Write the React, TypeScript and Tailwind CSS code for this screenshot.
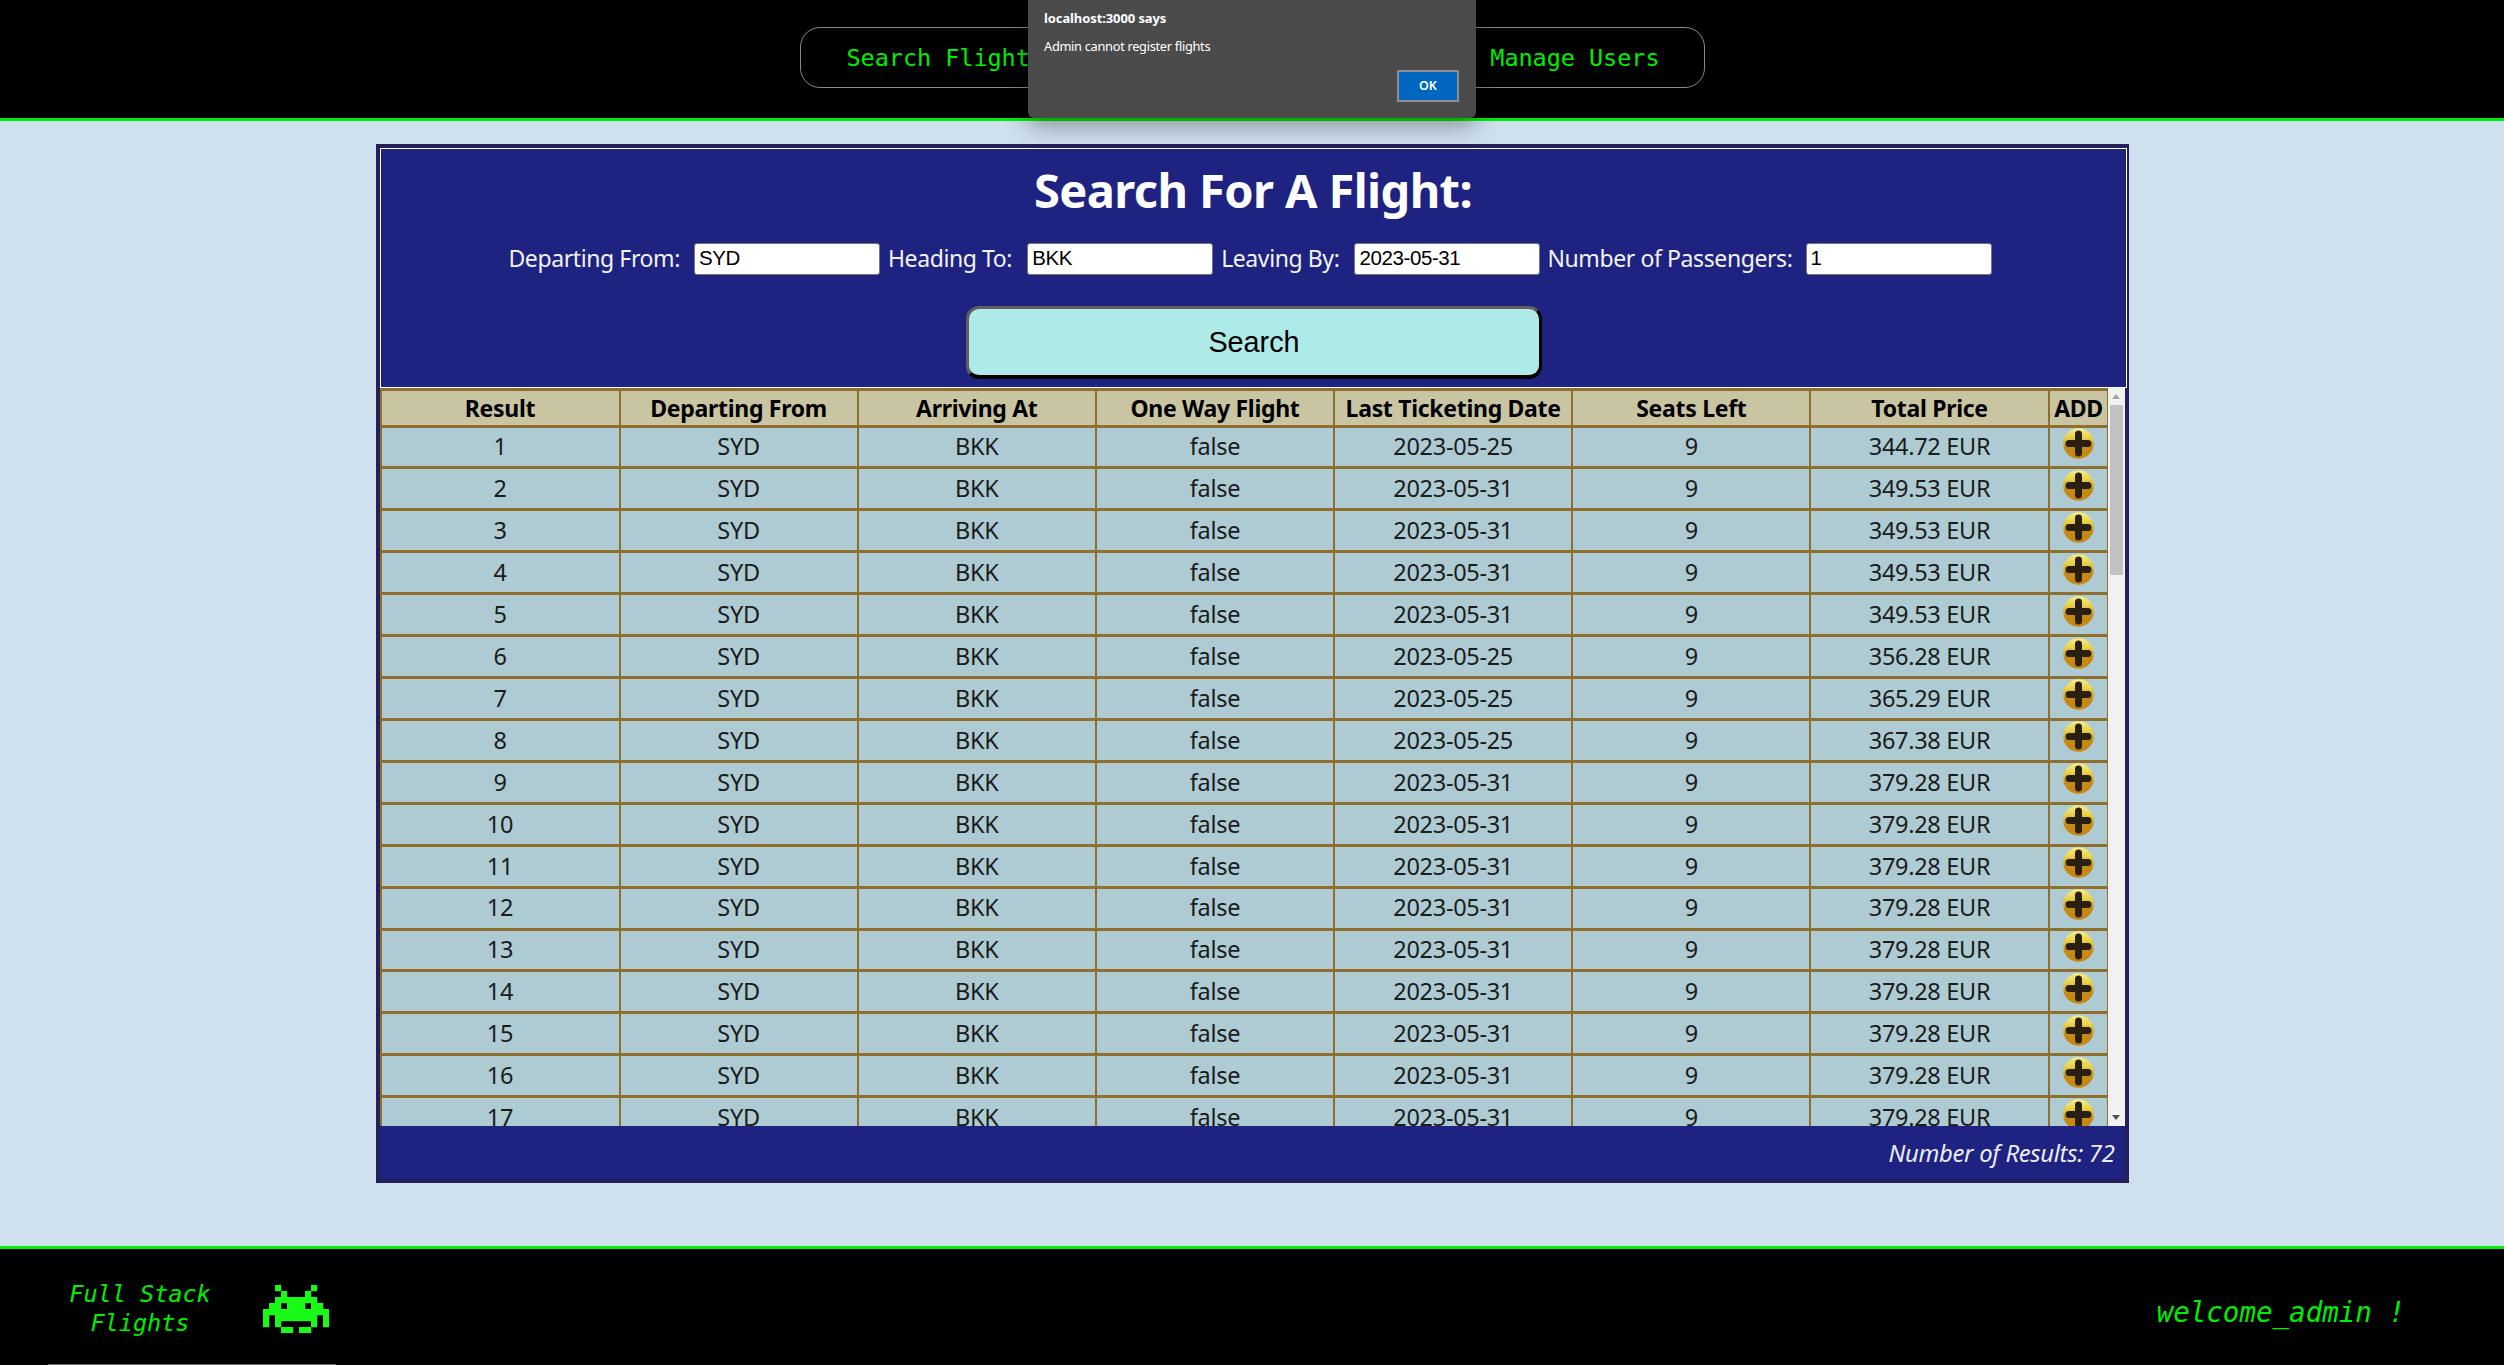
const dates = ["2023-05-25","2023-05-31","2023-05-31","2023-05-31","2023-05-31","2023-05-25","2023-05-25","2023-05-25","2023-05-31","2023-05-31","2023-05-31","2023-05-31","2023-05-31","2023-05-31","2023-05-31","2023-05-31","2023-05-31"];
const prices = ["344.72","349.53","349.53","349.53","349.53","356.28","365.29","367.38","379.28","379.28","379.28","379.28","379.28","379.28","379.28","379.28","379.28"];
const headers = ["Result","Departing From","Arriving At","One Way Flight","Last Ticketing Date","Seats Left","Total Price","ADD"];
const invader = [
  "..#.....#..",
  "...#...#...",
  "..#######..",
  ".##.###.##.",
  "###########",
  "#.#######.#",
  "#.#.....#.#",
  "...##.##...",
];

function Invader() {
  return (
    <svg width="66" height="48" viewBox="0 0 66 48" className="block">
      {invader.flatMap((row, y) =>
        row.split("").map((c, x) =>
          c === "#" ? <rect key={`${x}-${y}`} x={x * 6} y={y * 6} width="6.2" height="6.2" fill="#17fb17" /> : null
        )
      )}
    </svg>
  );
}

function PlusIcon({ id }: { id: number }) {
  return (
    <svg width="31" height="31" viewBox="0 0 31 31" className="block mx-auto -mt-[7px]">
      <defs>
        <linearGradient id={`gold${id}`} x1="0" y1="0" x2="0" y2="1">
          <stop offset="0" stopColor="#f6ee8a" />
          <stop offset="0.3" stopColor="#e8d24a" />
          <stop offset="0.5" stopColor="#d6ae22" />
          <stop offset="0.62" stopColor="#c68a14" />
          <stop offset="1" stopColor="#c8860f" />
        </linearGradient>
      </defs>
      <circle cx="15.5" cy="15.5" r="15.3" fill={`url(#gold${id})`} />
      <path d="M15.5 6V25M6 15.5H25" stroke="#2a2012" strokeWidth="7" strokeLinecap="round" />
    </svg>
  );
}

function Field({ label, value, className }: { label: string; value: string; className: string }) {
  return (
    <>
      <label className={`${className} pb-[2px]`}>{label}</label>
      <input
        readOnly
        value={value}
        className="w-[186px] h-[32px] bg-white border border-[#767676] rounded-[3px] px-[4px] pb-[2px] text-[20.5px] text-black font-['Liberation_Sans',sans-serif] outline-none"
      />
    </>
  );
}

export default function App() {
  return (
    <div className="relative h-[1365px] w-full flex flex-col bg-[#cfe0ef] overflow-hidden font-['Noto_Sans',sans-serif]">
      <header className="h-[121px] shrink-0 bg-black border-b-[3px] border-[#00ee00] flex justify-center pt-[27px]">
        <nav className="w-[905px] h-[61px] rounded-[20px] border border-[#8a8a8a] flex items-center justify-between pl-[46px] pr-[44px] pt-[2px] font-['DejaVu_Sans_Mono',monospace] text-[23.5px] tracking-[-0.05px] text-[#00ee00]">
          <span>Search Flights</span>
          <span>Manage Users</span>
        </nav>
      </header>

      <main className="flex-1 flex justify-center pt-[23px]">
        <section className="w-[1753px] h-[1039px] border-4 border-[#26205a] bg-[#1e2382] flex flex-col">
          <div className="h-[240px] shrink-0 -mr-[2px] border border-white flex flex-col items-center text-white">
            <h1 className="mt-[12px] h-[58px] leading-[58px] text-[47px] font-bold tracking-[-0.6px]">Search For A Flight:</h1>
            <div className="mt-[24px] h-[32px] flex items-center justify-center pr-[6px] text-[23px] tracking-[-0.4px] text-[#f3f3f3]">
              <Field label="Departing From:" value="SYD" className="mr-[14px]" />
              <Field label="Heading To:" value="BKK" className="ml-[8px] mr-[15px]" />
              <Field label="Leaving By:" value="2023-05-31" className="ml-[8px] mr-[15px]" />
              <Field label="Number of Passengers:" value="1" className="ml-[7px] mr-[13px]" />
            </div>
            <button className="mt-[31px] ml-[2px] w-[576px] h-[73px] pt-[2px] rounded-[13px] bg-[#aeeae7] border-[3px] border-t-[#5f5f5f] border-l-[#5f5f5f] border-r-black border-b-[4px] border-b-black text-black text-[28.8px] font-['Liberation_Sans',sans-serif]">
              Search
            </button>
          </div>

          <div className="h-[738px] shrink-0 flex">
            <div className="w-[1728px] shrink-0 overflow-hidden">
              <table className="w-[1728px] table-fixed border-collapse text-center text-[23.5px] tracking-[-0.3px] text-[#1b1b1b]">
                <colgroup>
                  <col className="w-[239px]" />
                  <col className="w-[238.2px]" />
                  <col className="w-[238.2px]" />
                  <col className="w-[238.2px]" />
                  <col className="w-[238.2px]" />
                  <col className="w-[238.2px]" />
                  <col className="w-[238.2px]" />
                  <col className="w-[59.8px]" />
                </colgroup>
                <thead>
                  <tr className="h-[36.5px] bg-[#c9c5a2]">
                    {headers.map((h) => (
                      <th key={h} className="border-x-2 border-y-[3px] border-[#8f6f2d] p-0 font-bold text-black leading-[30px] whitespace-nowrap text-[23px]">
                        {h}
                      </th>
                    ))}
                  </tr>
                </thead>
                <tbody>
                  {dates.map((d, i) => (
                    <tr key={i} className="h-[41.93px] bg-[#aecbd3]">
                      <td className="border-x-2 border-y-[3px] border-[#8f6f2d] p-0">{i + 1}</td>
                      <td className="border-x-2 border-y-[3px] border-[#8f6f2d] p-0">SYD</td>
                      <td className="border-x-2 border-y-[3px] border-[#8f6f2d] p-0">BKK</td>
                      <td className="border-x-2 border-y-[3px] border-[#8f6f2d] p-0">false</td>
                      <td className="border-x-2 border-y-[3px] border-[#8f6f2d] p-0">{d}</td>
                      <td className="border-x-2 border-y-[3px] border-[#8f6f2d] p-0">9</td>
                      <td className="border-x-2 border-y-[3px] border-[#8f6f2d] p-0">{prices[i]} EUR</td>
                      <td className="border-x-2 border-y-[3px] border-[#8f6f2d] p-0"><PlusIcon id={i} /></td>
                    </tr>
                  ))}
                </tbody>
              </table>
            </div>
            <div className="flex-1 bg-[#f1f1f1] flex flex-col items-center">
              <div className="h-[17px] flex items-center justify-center">
                <div className="w-0 h-0 border-x-[4px] border-x-transparent border-b-[5px] border-b-[#a3a3a3]" />
              </div>
              <div className="w-[13px] h-[170px] bg-[#c1c1c1]" />
              <div className="flex-1" />
              <div className="h-[17px] flex items-center justify-center">
                <div className="w-0 h-0 border-x-[4px] border-x-transparent border-t-[5px] border-t-[#505050]" />
              </div>
            </div>
          </div>

          <div className="h-[53px] shrink-0 flex items-center justify-end pr-[10px] pt-[2px] text-[23.8px] italic tracking-[-0.3px] text-[#ececf4]">
            Number of Results: 72
          </div>
        </section>
      </main>

      <footer className="relative h-[119px] shrink-0 bg-black border-t-[3px] border-[#00ee00] flex items-center font-['DejaVu_Sans_Mono',monospace] italic text-[#00ee00]">
        <div className="w-[280px] pt-[3px] text-center text-[23.5px] leading-[29px]">
          Full Stack
          <br />
          Flights
        </div>
        <div className="ml-[-17px] pt-[4px]">
          <Invader />
        </div>
        <div className="ml-auto mr-[99px] pt-[12px] text-[27.5px]">welcome_admin !</div>
        <div className="absolute left-[48px] bottom-0 w-[288px] h-px bg-[#6a6a6a]" />
      </footer>

      <div className="absolute left-[1028px] top-0 w-[448px] h-[118px] bg-[#4b4b4b] rounded-b-[6px] shadow-[0_8px_24px_rgba(0,0,0,0.35)] text-white pl-[16px] pr-[17px] pt-[10px] flex flex-col font-['Noto_Sans',sans-serif]">
        <div className="text-[13px] leading-[16px] font-bold tracking-[-0.1px]">localhost:3000 says</div>
        <div className="mt-[12px] text-[12.8px] leading-[16px] tracking-[-0.3px]">Admin cannot register flights</div>
        <div className="mt-auto mb-[16px] flex justify-end">
          <button className="w-[62px] h-[32px] bg-[#0067c0] border-2 border-[#8f8f8f] text-[12.5px] font-semibold text-white">OK</button>
        </div>
      </div>
    </div>
  );
}
